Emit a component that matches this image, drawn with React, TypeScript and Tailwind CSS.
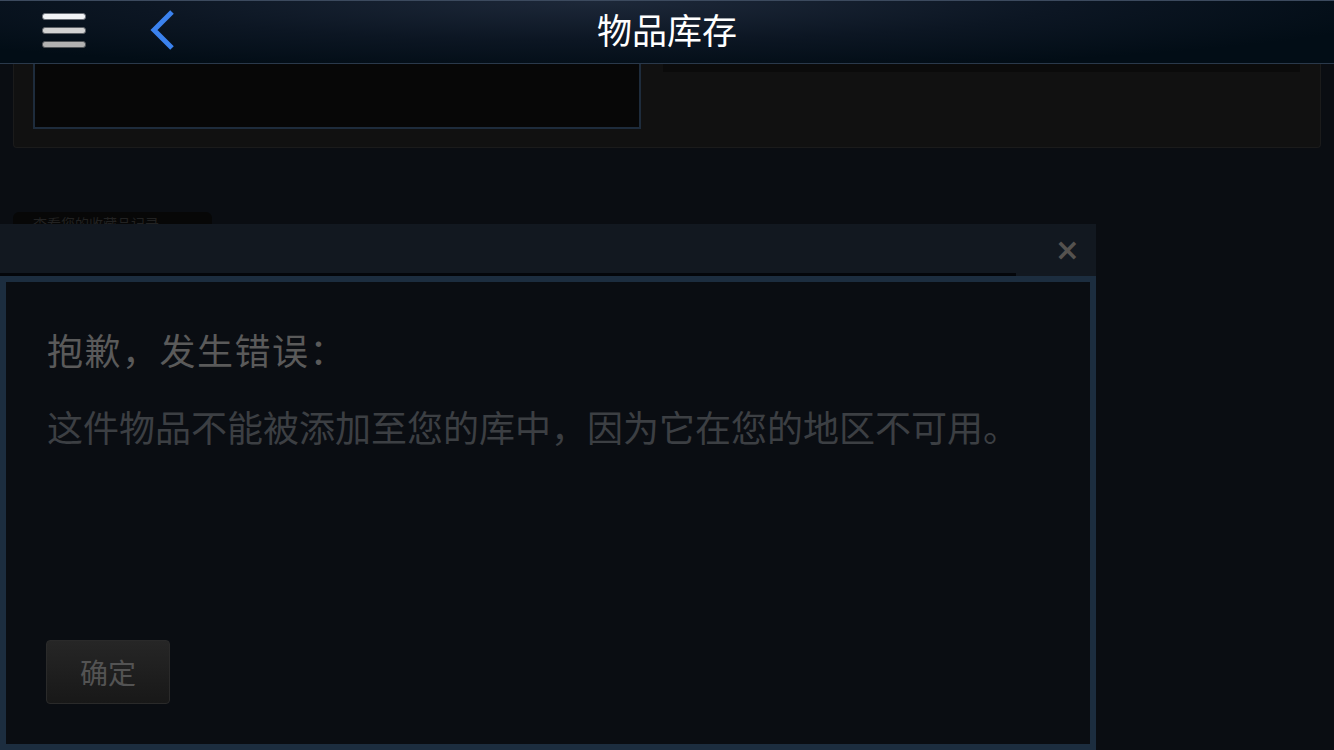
const cjk = "font-['Noto_Sans_CJK_SC','Noto_Sans',sans-serif]"

function Hamburger() {
  return (
    <div className="flex w-[44px] flex-col gap-[7px]">
      <div className="h-[7px] rounded-[3px] border border-[#6b7078] bg-[#f1f3f6]" />
      <div className="h-[7px] rounded-[3px] border border-[#5c6066] bg-[#d2d2d2]" />
      <div className="h-[7px] rounded-[3px] border border-[#4e5256] bg-[#b2b2b2]" />
    </div>
  )
}

function BackChevron() {
  return (
    <svg width="28" height="42" viewBox="0 0 28 42">
      <path d="M24 3 L6 21 L24 39" fill="none" stroke="#3b82ee" strokeWidth="5" />
    </svg>
  )
}

export default function App() {
  return (
    <div className={`relative h-[750px] w-[1334px] overflow-hidden bg-[#0a0d12] ${cjk}`}>
      {/* top bar */}
      <header className="grid h-[64px] grid-cols-[1fr_auto_1fr] items-center border-t border-b border-t-[#3c4a5e] border-b-[#2a394b] bg-[radial-gradient(ellipse_at_45%_0%,#1d2839_0%,#0c1623_45%,#020d16_80%)]">
        <div className="flex items-center">
          <div className="ml-[42px] -mt-[4px]">
            <Hamburger />
          </div>
          <div className="ml-[62px] -mt-[4px]">
            <BackChevron />
          </div>
        </div>
        <h1 className="-mt-[8px] text-[35px] leading-none text-white">物品库存</h1>
        <div />
      </header>

      {/* page behind the dialog */}
      <div className="mx-[13px] flex h-[84px] gap-[22px] rounded-b-[4px] border border-t-0 border-[#1b1b1b] bg-[#111111] pr-[20px]">
        <div className="ml-[19px] h-[65px] w-[608px] border-2 border-t-0 border-[#1e2c3c] bg-[#070707]" />
        <div className="h-[8px] flex-1 bg-[#0b0b0b]" />
      </div>
      <div className="mx-[13px] mt-[64px] h-[14px] w-[199px] rounded-t-[6px] bg-[#070707] px-[20px] pt-[4px] text-[14px] leading-none text-[#222222]">
        查看您的收藏品记录
      </div>

      {/* dialog */}
      <div className="absolute left-0 top-[224px] w-[1096px]">
        <div className="flex h-[49px] items-start justify-end bg-[#121820] pr-[16px] pt-[11px]">
          <span className="font-['DejaVu_Sans',sans-serif] text-[30px] font-bold leading-none text-[#55524f]">×</span>
        </div>
        <div className="flex h-[3px]">
          <div className="w-[1016px] bg-[#04060a]" />
          <div className="flex-1 bg-[#121820]" />
        </div>
        <div className="flex h-[474px] flex-col border-[6px] border-[#1c2d3f] bg-[#0a0d12] px-[41px] pt-[37px]">
          <h2 className="text-[36px] leading-[60px] tracking-[1.5px] text-[#5a5a5a]">抱歉，发生错误：</h2>
          <p className="mt-[17px] text-[36px] leading-[60px] text-[#3c3f43]">
            这件物品不能被添加至您的库中，因为它在您的地区不可用。
          </p>
          <button className="-ml-[1px] mt-[184px] flex h-[64px] w-[124px] items-center justify-center rounded-[4px] border border-[#2a2a2a] bg-gradient-to-b from-[#262626] to-[#181818] text-[28px] text-[#535353]">
            确定
          </button>
        </div>
      </div>
    </div>
  )
}
